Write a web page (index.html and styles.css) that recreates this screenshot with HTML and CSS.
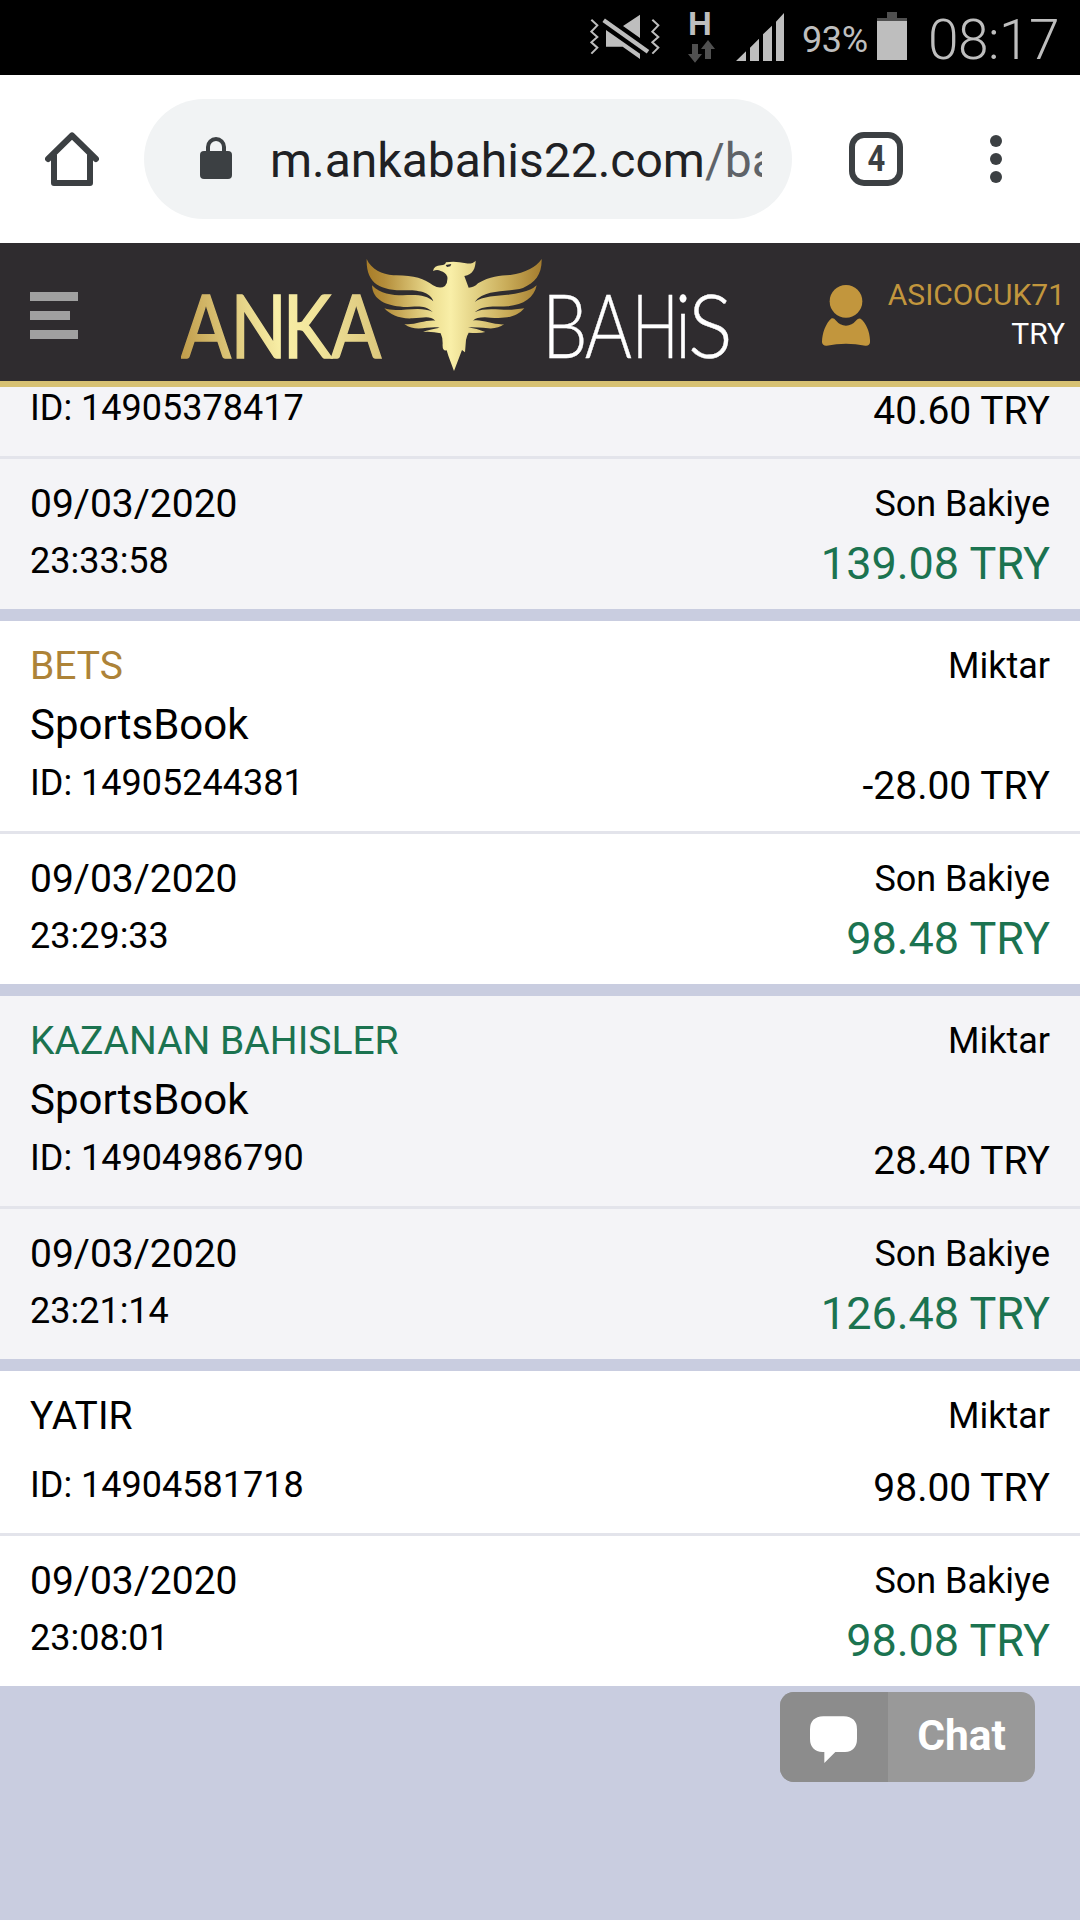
FILE: index.html
```html
<!DOCTYPE html>
<html lang="tr">
<head>
<meta charset="utf-8">
<title>Anka Bahis</title>
<link rel="stylesheet" href="styles.css">
</head>
<body>
<div class="status">
  <svg class="mute" width="71" height="50" viewBox="0 0 213 150" fill="#bebebe">
    <path d="M99 45 150 11V81Z M48 57 150 128V144L98 107H48Z"/>
    <path d="M41 28 174 122" stroke="#bebebe" stroke-width="13"/>
    <path d="M4 26 22 43 4 62 22 78 4 94 22 110 4 128M187 26 205 43 187 62 205 78 187 94 205 110 187 128" fill="none" stroke="#bebebe" stroke-width="6"/>
  </svg>
  <div class="net"><span>H</span>
    <svg width="27" height="23" viewBox="0 0 81 69" fill="#505050"><path d="M12 12H30V42H42L21 68 0 42H12ZM51 57V27H39L60 0 81 27H69V57Z"/></svg>
  </div>
  <svg class="signal" width="48" height="48" viewBox="0 0 144 144" fill="#bebebe"><path d="M0 144 30 115V144ZM42 144V104L69 77V144ZM81 144V64L108 38V144ZM120 144V26L144 0V144Z"/></svg>
  <span class="percent">93%</span>
  <svg class="battery" width="30" height="48" viewBox="0 0 90 144"><path fill="#505050" d="M30 0H60V18H90V27H0V18H30Z"/><path fill="#bebebe" d="M0 27H90V144H0Z"/></svg>
  <span class="clock">08:17</span>
</div>

<div class="toolbar">
  <svg class="home" width="54" height="54" viewBox="0 0 54 54" fill="none" stroke="#3c4043" stroke-width="6" stroke-linejoin="round" stroke-linecap="round"><path d="M3 27 27 3.5 51 27M9 23V51H45V23" /></svg>
  <div class="address">
    <svg width="32" height="42" viewBox="0 0 32 42"><rect y="14" width="32" height="28" rx="4" fill="#3c4043"/><path d="M8 16V10a8 8 0 0 1 16 0v6" fill="none" stroke="#3c4043" stroke-width="4"/></svg>
    <div class="url">m.ankabahis22.com<span>/ba</span></div>
  </div>
  <div class="tabs"><span>4</span></div>
  <svg class="more" width="12" height="48" viewBox="0 0 12 48" fill="#3c4043"><circle cx="6" cy="6" r="6"/><circle cx="6" cy="24" r="6"/><circle cx="6" cy="42" r="6"/></svg>
</div>

<header class="header">
  <div class="menu"><i></i><i></i><i></i></div>
  <svg class="logo" width="560" height="120" viewBox="0 0 560 120">
    <defs>
      <linearGradient id="word" gradientUnits="userSpaceOnUse" x1="0" y1="105" x2="236" y2="70">
        <stop offset="0" stop-color="#c09c4a"/><stop offset=".5" stop-color="#f8eea6"/><stop offset=".65" stop-color="#f3e79e"/><stop offset="1" stop-color="#dcc77c"/>
      </linearGradient>
      <linearGradient id="bird" gradientUnits="userSpaceOnUse" x1="20" y1="0" x2="545" y2="0">
        <stop offset="0" stop-color="#a87d28"/><stop offset=".1" stop-color="#b48d3a"/><stop offset=".38" stop-color="#eee093"/><stop offset=".48" stop-color="#f9efa8"/><stop offset=".6" stop-color="#e6d68a"/><stop offset=".8" stop-color="#c9ac59"/><stop offset="1" stop-color="#a47c2e"/>
      </linearGradient>
    </defs>
    <text class="anka" transform="scale(.84 1)" y="103" x="0 59 121 179" fill="url(#word)" stroke="url(#word)">ANKA</text>
    <g transform="translate(179 -15) scale(.33333)" fill="url(#bird)">
      <path d="M20 57C34 88 66 103 100 106C160 105 192 115 219 136Q240 148 255 138Q264 128 262 110Q256 96 242 93Q232 87 219 93Q222 77 243 76Q256 76 258 67Q285 62 318 70Q337 73 347 62C346 84 340 103 313 108L326 143Q342 143 354 130C390 108 421 107 451 105Q520 94 545 57C546 104 525 128 489 144C445 158 375 145 344 186C374 162 438 170 485 157Q514 151 530 136C522 174 491 194 443 199C404 202 373 193 344 217C374 201 420 211 455 209L493 205C468 235 430 235 392 233Q352 229 339 242C365 237 398 255 432 253Q414 267 385 265Q346 261 324 262Q350 266 376 276Q360 281 326 278Q320 288 318 300L315 337 306 330 300 346 282 393 265 347 260 331Q246 334 248 310Q248 292 242 280Q216 274 189 276Q208 268 239 263C205 257 166 278 133 252C161 257 195 239 226 242C210 226 189 234 157 235C117 237 91 224 73 205C112 220 181 194 218 216C193 193 171 201 130 201C79 197 38 181 36 136C62 162 94 166 129 166C175 163 202 167 220 184C211 155 173 151 137 151C61 151 18 132 20 57Z"/>
      <path d="M257 75 274 72 271 79 261 81Z" fill="#2f2c2f"/>
    </g>
    <g class="bahis" fill="#fff" stroke="#fff">
      <text transform="translate(361 103) scale(.82 1)" x="0 52">BA</text>
      <text transform="translate(451 103) scale(.7 1)">H</text>
      <text transform="translate(494 103) scale(.82 1)">i</text>
      <text transform="translate(507 103) scale(.95 1)">S</text>
    </g>
  </svg>
  <div class="account">
    <svg width="48" height="61" viewBox="0 0 144 183" fill="#c2963d"><circle cx="72" cy="49" r="49"/><path d="M29 100Q36 98 41 106Q54 122 72 122Q90 122 103 106Q109 98 116 101C134 115 145 145 144 172Q143 183 130 182Q72 171 14 182Q2 183 0 172C0 145 11 115 29 100Z"/></svg>
    <div class="who"><span class="name">ASICOCUK71</span><span>TRY</span></div>
  </div>
</header>

<main class="list">
  <article class="card shade">
    <section class="top cut">
      <div class="left"><p class="id">ID: 14905378417</p></div>
      <div class="right"><p class="amount">40.60 TRY</p></div>
    </section>
    <section class="bottom">
      <div class="left"><p class="date">09/03/2020</p><p class="id">23:33:58</p></div>
      <div class="right"><p class="label">Son Bakiye</p><p class="balance">139.08 TRY</p></div>
    </section>
  </article>
  <article class="card">
    <section class="top">
      <div class="left"><p class="type gold">BETS</p><p class="source">SportsBook</p><p class="id">ID: 14905244381</p></div>
      <div class="right"><p class="label">Miktar</p><p class="amount">-28.00 TRY</p></div>
    </section>
    <section class="bottom">
      <div class="left"><p class="date">09/03/2020</p><p class="id">23:29:33</p></div>
      <div class="right"><p class="label">Son Bakiye</p><p class="balance">98.48 TRY</p></div>
    </section>
  </article>
  <article class="card shade">
    <section class="top">
      <div class="left"><p class="type green">KAZANAN BAHISLER</p><p class="source">SportsBook</p><p class="id">ID: 14904986790</p></div>
      <div class="right"><p class="label">Miktar</p><p class="amount">28.40 TRY</p></div>
    </section>
    <section class="bottom">
      <div class="left"><p class="date">09/03/2020</p><p class="id">23:21:14</p></div>
      <div class="right"><p class="label">Son Bakiye</p><p class="balance">126.48 TRY</p></div>
    </section>
  </article>
  <article class="card">
    <section class="top short">
      <div class="left"><p class="type">YATIR</p><p class="id">ID: 14904581718</p></div>
      <div class="right"><p class="label">Miktar</p><p class="amount">98.00 TRY</p></div>
    </section>
    <section class="bottom">
      <div class="left"><p class="date">09/03/2020</p><p class="id">23:08:01</p></div>
      <div class="right"><p class="label">Son Bakiye</p><p class="balance">98.08 TRY</p></div>
    </section>
  </article>
</main>

<div class="chat">
  <div class="chat-icon"><svg width="47" height="47" viewBox="0 0 141 141" fill="#fff"><path d="M40 1H101Q141 3 141 40V68Q141 105 105 108H76L43 141V108H38Q0 105 0 68V40Q0 3 40 1Z"/></svg></div>
  <div class="chat-text">Chat</div>
</div>
</body>
</html>
```
FILE: styles.css
```css
* { box-sizing: border-box; }
body {
  margin: 0;
  width: 1080px;
  height: 1920px;
  overflow: hidden;
  background: #c9cde0;
  color: #000;
  font-family: Roboto, sans-serif;
}
p { margin: 0; }
svg { display: block; flex: none; }

.status {
  height: 75px;
  background: #000;
  color: #bebebe;
  display: flex;
  align-items: flex-start;
  padding-left: 590px;
}
.mute { margin-top: 11px; }
.net { width: 27px; margin: 9px 0 0 27px; }
.net span {
  display: block;
  height: 31px;
  font: bold 33px/30px "Liberation Sans", sans-serif;
}
.signal { margin: 13px 0 0 21px; }
.percent { width: 66px; margin: 19px 0 0 18px; font-size: 36px; line-height: 42px; letter-spacing: -.4px; }
.battery { margin: 12px 0 0 9px; }
.clock { margin: 8px 0 0 21px; font-size: 55px; line-height: 64px; font-weight: 300; letter-spacing: -.5px; }

.toolbar {
  height: 168px;
  background: #fff;
  display: flex;
  align-items: center;
  padding-left: 45px;
}
.address {
  width: 648px;
  height: 120px;
  margin-left: 45px;
  border-radius: 60px;
  background: #f1f3f4;
  display: flex;
  align-items: center;
  padding-left: 56px;
}
.address svg { margin-top: -3px; }
.url {
  width: 492px;
  margin: 4px 0 0 38px;
  overflow: hidden;
  white-space: nowrap;
  font-size: 48px;
  line-height: 64px;
  color: #202124;
}
.url span { color: #5f6368; }
.tabs {
  width: 54px;
  height: 54px;
  margin-left: 57px;
  border: 6px solid #3c4043;
  border-radius: 15px;
  display: flex;
  align-items: center;
  justify-content: center;
  color: #3c4043;
  font-size: 36px;
  line-height: 40px;
  font-weight: 700;
}
.tabs span { transform: scaleX(.86); }
.more { margin-left: 87px; }

.header {
  height: 144px;
  background: #2f2c2f;
  border-bottom: 6px solid #d7c173;
  display: flex;
  padding-left: 30px;
}
.menu { width: 48px; padding-top: 49px; display: grid; gap: 10px; align-content: start; }
.menu i { height: 9px; background: #a0a0a0; }
.menu i:nth-child(2) { width: 40px; }
.logo { margin: 12px 0 0 103px; }
.anka { font: 400 88px Lato, sans-serif; stroke-width: 1.6px; }
.bahis { font: 300 88px Lato, sans-serif; stroke-width: .4px; }
.account { margin-left: auto; padding-right: 15px; display: flex; gap: 18px; }
.account svg { margin-top: 42px; }
.who {
  padding-top: 32px;
  color: #fff;
  font-size: 30px;
  line-height: 39px;
  text-align: right;
}
.who span { display: block; }
.who .name { color: #c2963d; }

.list { display: grid; gap: 12px; }
.card { background: #fff; }
.shade { background: #f4f4f7; }
.card section { display: flex; justify-content: space-between; padding: 16px 30px 0; }
.top { height: 213px; border-bottom: 3px solid #e3e4eb; }
.top.short { height: 165px; }
.card .top.cut { height: 72px; padding-top: 0; }
.bottom { height: 150px; }
.right { text-align: right; }
.type, .date { font-size: 39px; line-height: 58px; }
.source { font-size: 42px; line-height: 60px; }
.id { font-size: 36px; line-height: 56px; }
.label { font-size: 36px; line-height: 58px; }
.amount { font-size: 39px; line-height: 50px; margin-top: 66px; }
.short .amount { margin-top: 18px; }
.short .id { margin-top: 12px; }
.cut .id { line-height: 43px; }
.cut .amount { line-height: 49px; margin-top: 0; }
.balance { font-size: 45px; line-height: 61px; color: #1b7350; }
.gold { color: #ad8338; }
.green { color: #1b7350; }

.chat {
  width: 255px;
  height: 90px;
  margin: 6px 45px 0 auto;
  border-radius: 14px;
  overflow: hidden;
  display: flex;
  background: #999;
  color: #fff;
}
.chat-icon { width: 108px; padding: 24px 0 0 30px; background: #8c8c8c; }
.chat-text { flex: 1; text-align: center; font-size: 42.5px; line-height: 88px; font-weight: 700; }
```
